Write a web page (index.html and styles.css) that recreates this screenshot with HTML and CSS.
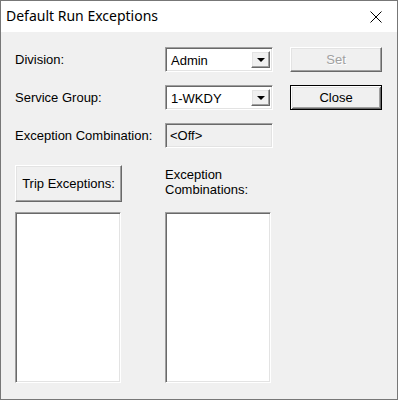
FILE: index.html
```html
<!DOCTYPE html>
<html lang="en">
<head>
    <meta charset="UTF-8">
    <meta name="viewport" content="width=device-width, initial-scale=1.0">
    <title>Default Run Exceptions</title>
    <link rel="stylesheet" href="styles.css">
</head>
<body>
    <div class="window">
        <div class="titlebar">
            <span class="title">Default Run Exceptions</span>
            <svg class="close-x" width="12" height="12" viewBox="0 0 12 12" aria-label="Close">
                <path d="M0.5 0.5 L11.5 11.5 M11.5 0.5 L0.5 11.5" stroke="#000" stroke-width="1" fill="none"/>
            </svg>
        </div>

        <div class="client">
            <div class="form">
                <span class="label">Division:</span>
                <div class="combo sunken">
                    <span class="combo-text">Admin</span>
                    <span class="combo-btn"><i class="arrow"></i></span>
                </div>
                <button class="btn" disabled>Set</button>

                <span class="label">Service Group:</span>
                <div class="combo sunken">
                    <span class="combo-text">1-WKDY</span>
                    <span class="combo-btn"><i class="arrow"></i></span>
                </div>
                <button class="btn default">Close</button>

                <span class="label">Exception Combination:</span>
                <div class="field sunken">&lt;Off&gt;</div>
            </div>

            <div class="lists">
                <button class="btn trip">Trip Exceptions:</button>
                <span class="label two-line">Exception<br>Combinations:</span>
                <div class="listbox sunken"></div>
                <div class="listbox sunken"></div>
            </div>
        </div>
    </div>
</body>
</html>
```

FILE: styles.css
```css
* {
    box-sizing: border-box;
}

body {
    margin: 0;
    font-family: "Liberation Sans", Arial, sans-serif;
    font-size: 13px;
    color: #000;
}

.window {
    width: 398px;
    height: 400px;
    border: 1px solid #777;
    background: #f0f0f0;
    display: flex;
    flex-direction: column;
}

.titlebar {
    height: 31px;
    background: #fff;
    display: flex;
    align-items: center;
    justify-content: space-between;
    padding: 0 15px 0 5px;
}

.title {
    font-family: "Noto Sans", "Open Sans", sans-serif;
    font-size: 14px;
    padding-bottom: 2px;
}

.close-x {
    display: block;
}

.client {
    padding: 15px 0 0 14px;
}

.form {
    display: grid;
    grid-template-columns: 150px 125px 92px;
    grid-auto-rows: 25px;
    row-gap: 13px;
}

.label {
    align-self: center;
    white-space: nowrap;
}

.combo {
    width: 108px;
    height: 25px;
    display: flex;
    align-items: stretch;
    background: #fff;
    padding: 2px;
}

.combo-text {
    flex: 1;
    padding-left: 3px;
    line-height: 21px;
}

.combo-btn {
    width: 19px;
    margin: 1px 0;
    display: flex;
    align-items: center;
    justify-content: center;
    background: #f0f0f0;
    border: 1px solid;
    border-color: #fff #696969 #696969 #fff;
    box-shadow: inset -1px -1px #a0a0a0, inset 1px 1px #e3e3e3;
}

.arrow {
    width: 0;
    height: 0;
    border-left: 4px solid transparent;
    border-right: 4px solid transparent;
    border-top: 4px solid #000;
}

.sunken {
    border: 1px solid;
    border-color: #a0a0a0 #fff #fff #a0a0a0;
    box-shadow: inset 1px 1px #696969, inset -1px -1px #e3e3e3;
}

.field {
    width: 108px;
    padding: 0 4px;
    line-height: 23px;
    background: #f0f0f0;
}

.btn {
    font: inherit;
    color: #000;
    background: #f0f0f0;
    border: 1px solid;
    border-color: #fff #696969 #696969 #fff;
    box-shadow: inset -1px -1px #a0a0a0, inset 1px 1px #e3e3e3;
    padding: 0;
    width: 92px;
    height: 25px;
}

.btn:disabled {
    color: #a0a0a0;
    text-shadow: 1px 1px #fff;
}

.btn.default {
    border: 1px solid #000;
    box-shadow: inset 1px 1px #fff, inset -1px -1px #696969, inset 2px 2px #e3e3e3, inset -2px -2px #a0a0a0;
}

.lists {
    display: grid;
    grid-template-columns: 150px 106px;
    grid-template-rows: 37px 171px;
    row-gap: 10px;
    margin-top: 17px;
}

.btn.trip {
    width: 107px;
    height: 37px;
}

.two-line {
    align-self: start;
    padding-top: 2px;
    line-height: 15px;
}

.listbox {
    width: 106px;
    height: 171px;
    background: #fff;
}
```
